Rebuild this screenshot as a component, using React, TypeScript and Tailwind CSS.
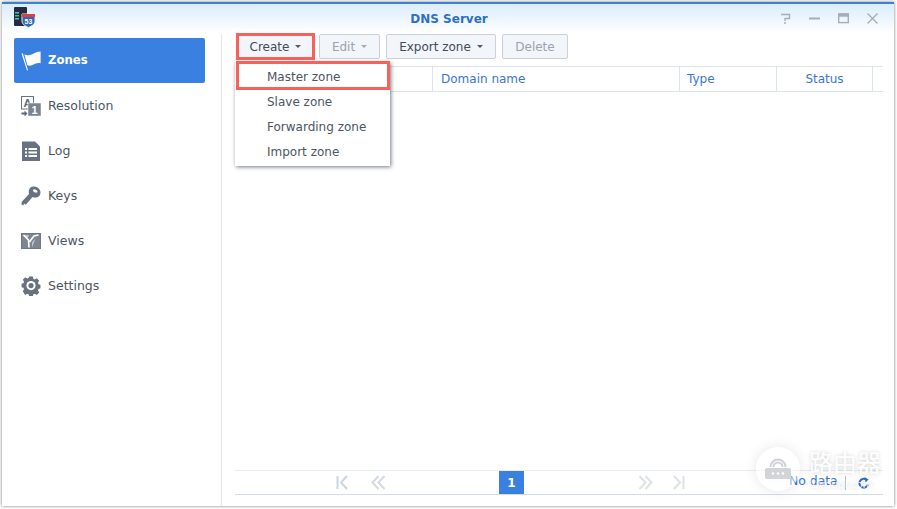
const font = "font-['DejaVu_Sans',sans-serif]";

function ZonesIcon() {
  return (
    <svg width="20" height="20" viewBox="0 0 20 20" fill="#fff">
      <path d="M0.6 2.5 6 19.5 7 19.2 1.8 2.2Z" />
      <path d="M3.4 3.4C7 5.2 10 3.6 12.6 2.4 15 1.4 17 0.8 19.6 0.6L19.6 12.2C16.5 11.6 14 12.8 11.8 13.8 9.8 14.7 8 15 6.4 14.2Z" />
    </svg>
  );
}

function ResolutionIcon() {
  return (
    <svg width="20" height="20" viewBox="0 0 20 20">
      <rect x="0.5" y="0.5" width="12" height="12.5" fill="none" stroke="#6b7280" strokeWidth="1" />
      <text x="6.5" y="11" textAnchor="middle" fontSize="11" fontWeight="700" fill="#5f6875" fontFamily="Liberation Sans">A</text>
      <rect x="7" y="7" width="13" height="13" fill="#7b838e" stroke="#fff" strokeWidth="0.5" />
      <text x="13.5" y="18" textAnchor="middle" fontSize="11" fontWeight="700" fill="#fff" fontFamily="Liberation Sans">1</text>
      <path d="M0.5 16.5h3v-2l3 3-3 3v-2h-3Z" fill="#5f6875" />
    </svg>
  );
}

function LogIcon() {
  return (
    <svg width="20" height="20" viewBox="0 0 20 20">
      <path d="M1 0.5H14L19 5.5V20H1Z" fill="#687280" />
      <g fill="#fff">
        <rect x="4" y="7" width="2" height="2" />
        <rect x="7.5" y="7" width="8.5" height="2" />
        <rect x="4" y="10.5" width="2" height="2" />
        <rect x="7.5" y="10.5" width="8.5" height="2" />
        <rect x="4" y="14" width="2" height="2" />
        <rect x="7.5" y="14" width="8.5" height="2" />
      </g>
    </svg>
  );
}

function KeysIcon() {
  return (
    <svg width="20" height="20" viewBox="0 0 20 20" fill="#687280">
      <path d="M12.5 0.5C16.5 0.5 19.5 3.2 19.5 6.5 19.5 10.5 15.5 12.8 11.5 11L4.8 18.8 3 17.6 2.4 19.6 0.4 18.4 0.8 15.8 8 8C7 4 9 0.5 12.5 0.5Z" />
      <ellipse cx="14.2" cy="5" rx="2.4" ry="1.5" fill="#fff" transform="rotate(25 14.2 5)" />
    </svg>
  );
}

function ViewsIcon() {
  return (
    <svg width="20" height="16" viewBox="0 0 20 16">
      <rect x="0.5" y="0.5" width="19" height="15" fill="#7f8692" stroke="#6f7885" />
      <path d="M2 2H8L6.5 5.5Z" fill="#c5c9cf" />
      <path d="M2.5 2 7.5 7 8 14.5M17.5 2 13 3 9.5 7.5 8.5 9" fill="none" stroke="#fff" strokeWidth="1.6" />
      <path d="M11 14.5V9.5L14.5 5.5 11 14.5" fill="#c5c9cf" />
    </svg>
  );
}

function SettingsIcon() {
  return (
    <svg width="20" height="20" viewBox="0 0 20 20">
      <path
        d="M8 0.5h4l.6 2.6 1.6.7 2.3-1.4 2.6 2.8-1.4 2.2.7 1.6 2.1.6v3.8l-2.1.6-.7 1.6 1.4 2.2-2.6 2.8-2.3-1.4-1.6.7-.6 2.6H8l-.6-2.6-1.6-.7-2.3 1.4L.9 16.7l1.4-2.2-.7-1.6L-.5 12.3V8.5l2.1-.6.7-1.6L.9 4.1l2.6-2.8 2.3 1.4 1.6-.7Z"
        fill="#687280"
        transform="translate(1 0) scale(.9 .92)"
      />
      <circle cx="10" cy="9.6" r="4.6" fill="#fff" />
      <circle cx="10" cy="9.6" r="2.6" fill="#687280" />
    </svg>
  );
}

function AppIcon() {
  return (
    <svg width="22" height="21" viewBox="0 0 22 21">
      <rect x="0" y="0" width="13" height="19" rx="1" fill="#252b3d" />
      <rect x="1" y="5" width="4" height="1.5" fill="#41c4d6" />
      <rect x="1" y="8" width="4" height="1.5" fill="#45c46a" />
      <rect x="1" y="11" width="4" height="1.5" fill="#41c4d6" />
      <path d="M8 7H21V14C21 17.5 17.5 19 14.5 20.5 11.5 19 8 17.5 8 14Z" fill="#2f68b0" stroke="#e8edf3" />
      <path d="M8 7H21V10H8Z" fill="#d9404a" />
      <text x="14.5" y="17" textAnchor="middle" fontSize="7" fontWeight="700" fill="#fff" fontFamily="Liberation Sans">53</text>
    </svg>
  );
}

const navItems = [
  { label: "Zones", icon: <ZonesIcon />, active: true },
  { label: "Resolution", icon: <ResolutionIcon /> },
  { label: "Log", icon: <LogIcon /> },
  { label: "Keys", icon: <KeysIcon /> },
  { label: "Views", icon: <ViewsIcon /> },
  { label: "Settings", icon: <SettingsIcon /> },
];

function Caret({ muted }: { muted?: boolean }) {
  return <span className={`ml-[6px] inline-block h-0 w-0 border-x-[3px] border-t-[3px] border-x-transparent ${muted ? "border-t-[#a3abb7]" : "border-t-[#4f5b6b]"}`} />;
}

function ToolButton({ label, width, disabled, caret }: { label: string; width: string; disabled?: boolean; caret?: boolean }) {
  return (
    <div className={`flex h-[25px] items-center justify-center rounded-[2px] border border-[#c8d0dc] bg-[#f2f5f9] text-[12px] ${width} ${disabled ? "text-[#9aa3af]" : "text-[#414b5a]"}`}>
      {label}
      {caret && <Caret muted={disabled} />}
    </div>
  );
}

function PagerIcon({ kind, color }: { kind: "first" | "prev" | "next" | "last"; color: string }) {
  const paths = {
    first: "M1.5 1V14M11 1 5 7.5 11 14",
    prev: "M7.5 1 1.5 7.5 7.5 14M13.5 1 7.5 7.5 13.5 14",
    next: "M1.5 1 7.5 7.5 1.5 14M7.5 1 13.5 7.5 7.5 14",
    last: "M10.5 1V14M1 1 7 7.5 1 14",
  };
  return (
    <svg width="15" height="15" viewBox="0 0 15 15" fill="none" stroke={color} strokeWidth="2">
      <path d={paths[kind]} />
    </svg>
  );
}

export default function App() {
  return (
    <div className={`relative h-[509px] w-[897px] overflow-hidden bg-white p-[2px] pb-[3px] pr-[3px] ${font}`}>
      <div className="relative flex h-full flex-col border-t-2 border-[#3a80e0] bg-white shadow-[0_0_3px_rgba(0,0,0,0.55)]">
        {/* Title bar */}
        <div className="relative flex h-[30px] shrink-0 items-center justify-center bg-gradient-to-b from-[#dcecfb] to-white">
          <div className="absolute left-[12px] top-[3px]"><AppIcon /></div>
          <span className="pl-[2px] text-[12px] font-bold text-[#2f6fc4]">DNS Server</span>
          <div className="absolute right-[16px] top-[9px] flex items-center gap-[18px] text-[#a5adb8]">
            <svg width="11" height="11" viewBox="0 0 11 11" fill="none" stroke="currentColor" strokeWidth="1.4"><path d="M1 1.5H9.5V5.5H5V8M5 9V11" /></svg>
            <svg width="11" height="11" viewBox="0 0 11 11" fill="currentColor"><rect y="4.5" width="11" height="2" /></svg>
            <svg width="11" height="11" viewBox="0 0 11 11" fill="none" stroke="currentColor" strokeWidth="1.4"><rect x="0.7" y="1" width="9.6" height="8.6" /><rect x="0.7" y="1" width="9.6" height="2" fill="currentColor" /></svg>
            <svg width="11" height="11" viewBox="0 0 11 11" fill="none" stroke="currentColor" strokeWidth="1.4"><path d="M0.5 0.5 10.5 10.5M10.5 0.5 0.5 10.5" /></svg>
          </div>
        </div>

        <div className="flex min-h-0 flex-1">
          {/* Sidebar */}
          <aside className="flex w-[220px] shrink-0 flex-col border-r border-[#e3e7ec] pl-[12px] pr-[16px] pt-[4px]">
            {navItems.map(({ label, icon, active }) => (
              <div
                key={label}
                className={`flex h-[45px] items-center rounded-[2px] pl-[7px] pt-[1px] ${active ? "bg-[#3a80e0] text-[11.7px] font-bold text-white" : "text-[12.5px] text-[#4b5563]"}`}
              >
                <span className="flex w-[27px] shrink-0 items-center">{icon}</span>
                {label}
              </div>
            ))}
          </aside>

          {/* Main */}
          <main className="relative flex min-w-0 flex-1 flex-col pl-[13px] pr-[11px]">
            <div className="flex gap-[6px] pl-[3px]">
              <ToolButton label="Create" width="w-[75px]" caret />
              <ToolButton label="Edit" width="w-[61px]" disabled caret />
              <ToolButton label="Export zone" width="w-[110px]" caret />
              <ToolButton label="Delete" width="w-[66px]" disabled />
            </div>

            <div className="mt-[7px] flex h-[26px] border-y border-[#dce3ee] text-[12px] text-[#3a74d8]">
              <div className="w-[198px] border-r border-[#dce3ee]" />
              <div className="w-[247px] border-r border-[#dce3ee] pl-[8px] leading-[24px]">Domain name</div>
              <div className="w-[97px] border-r border-[#dce3ee] pl-[7px] leading-[24px]">Type</div>
              <div className="w-[96px] border-r border-[#dce3ee] text-center leading-[24px]">Status</div>
            </div>

            <div className="flex-1" />

            {/* Pager */}
            <div className="relative mb-[11px] flex h-[25px] items-center border-b border-t border-b-[#d3dcec] border-t-[#e9edf2]">
              <div className="ml-[101px] flex w-[50px] justify-between">
                <PagerIcon kind="first" color="#cdd5e0" />
                <PagerIcon kind="prev" color="#d3dae4" />
              </div>
              <div className="ml-[113px] flex h-full w-[25px] items-center justify-center bg-[#3a80e0] text-[12px] font-bold text-white">1</div>
              <div className="ml-[114px] flex w-[50px] justify-between">
                <PagerIcon kind="next" color="#dde2ea" />
                <PagerIcon kind="last" color="#dde2ea" />
              </div>
              <span className="ml-[101px] pb-[2px] text-[12.4px] text-[#3a74d8]">No data</span>
              <span className="ml-[7px] h-[14px] w-px bg-[#b8bec8]" />
              <svg className="ml-[12px]" width="12" height="12" viewBox="0 0 12 12" fill="none" stroke="#2f6fc4" strokeWidth="2">
                <path d="M10 7.5A4.4 4.4 0 1 1 8 2.3" />
                <path d="M6.5 0 10.5 2.5 7.5 5.5Z" fill="#2f6fc4" stroke="none" />
              </svg>
            </div>

            {/* Create menu */}
            <div className="absolute left-[13px] top-[28px] flex w-[155px] flex-col bg-white py-[2px] text-[12px] text-[#4b5563] shadow-[1px_1px_4px_rgba(40,50,70,0.65)]">
              {["Master zone", "Slave zone", "Forwarding zone", "Import zone"].map((item) => (
                <div key={item} className="flex h-[25px] items-center pl-[32px]">{item}</div>
              ))}
            </div>

            {/* Red callouts */}
            <div className="pointer-events-none absolute left-[14px] top-[-1px] h-[27px] w-[79px] border-[3px] border-[#f8605a]" />
            <div className="pointer-events-none absolute left-[14px] top-[27px] h-[29px] w-[154px] border-[3px] border-[#f8605a]" />
          </main>
        </div>
      </div>

      {/* Watermark */}
      <div className="pointer-events-none absolute left-[756px] top-[447px] flex h-[44px] w-[44px] items-center justify-center rounded-full bg-white/45 shadow-[0_0_14px_rgba(0,0,0,0.1)]">
        <svg width="28" height="24" viewBox="0 0 28 24" fill="none" stroke="#cfd1d5" strokeWidth="2">
          <path d="M9.5 10A4.5 4.5 0 0 1 18.5 10M6.5 10A7.5 7.5 0 0 1 21.5 10" />
          <rect x="1" y="11" width="26" height="11" rx="2" fill="#d2d4d8" stroke="none" />
          <circle cx="9" cy="16.5" r="1.2" fill="#fff" stroke="none" />
          <circle cx="14" cy="16.5" r="1.2" fill="#fff" stroke="none" />
          <circle cx="19" cy="16.5" r="1.2" fill="#fff" stroke="none" />
        </svg>
      </div>
      <div className="pointer-events-none absolute left-[809px] top-[447px] flex flex-col font-['Noto_Sans_CJK_SC',sans-serif] text-white [text-shadow:0_0_4px_rgba(0,0,0,0.2)]">
        <span className="text-[24px] leading-[30px]">路由器</span>
        <span className="mt-[-1px] text-[11px] leading-[14px] text-white/80">luyouqi.com</span>
      </div>
    </div>
  );
}
